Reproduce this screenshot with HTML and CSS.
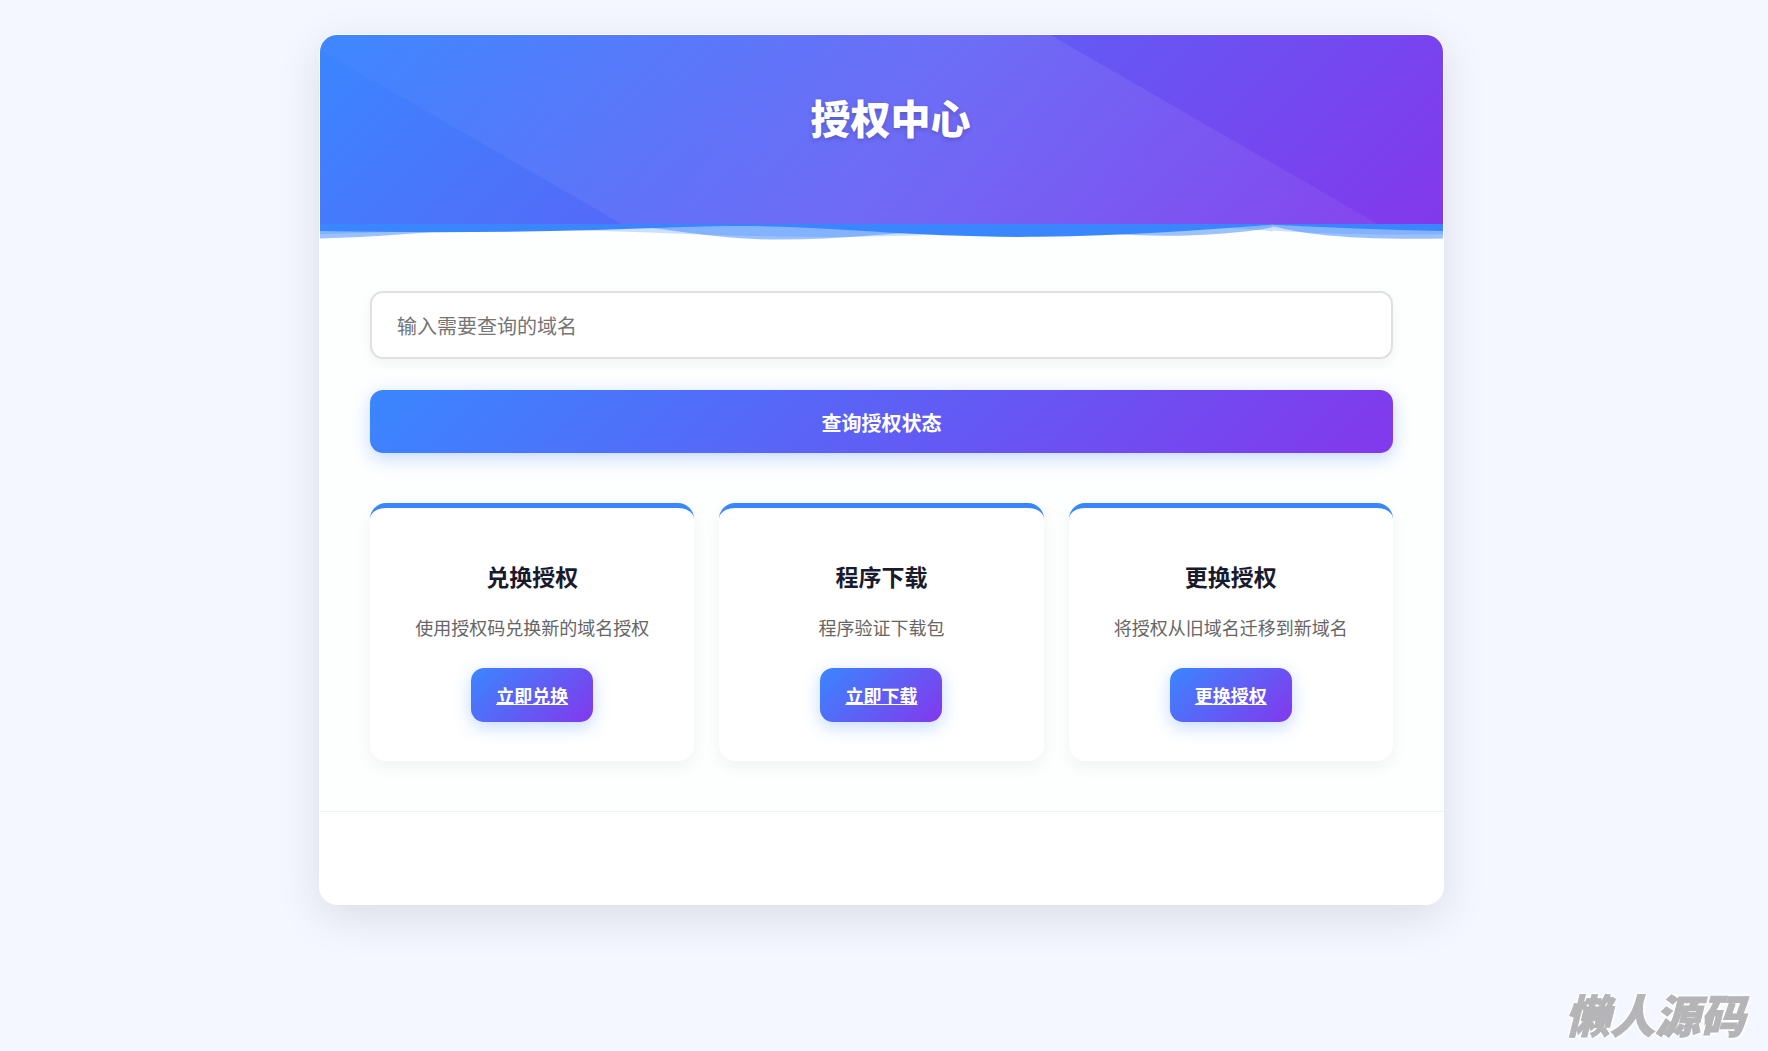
FILE: index.html
```html
<!DOCTYPE html>
<html lang="zh-CN">
<head>
<meta charset="utf-8">
<meta name="viewport" content="width=device-width, initial-scale=1">
<title>授权中心</title>
<link rel="stylesheet" href="styles.css">
</head>
<body>
<main class="panel">
  <header class="hero">
    <h1 class="hero-title">授权中心</h1>
  </header>
  <svg class="wave" viewBox="0 0 1200 120" preserveAspectRatio="none" aria-hidden="true">
    <defs>
      <g id="wave-tile" fill="#3a86ff">
        <path opacity=".25" d="M0,0V46.29c47.79,22.2,103.59,32.17,158,28,70.36-5.37,136.33-33.31,206.8-37.5C438.64,32.43,512.34,53.67,583,72.05c69.27,18,138.3,24.88,209.4,13.08,36.15-6,69.85-17.84,104.45-29.34C989.49,25,1113-14.29,1200,52.47V0Z"/>
        <path opacity=".5" d="M0,0V15.81C13,36.92,27.64,56.86,47.69,72.05,99.41,111.27,165,111,224.58,91.58c31.15-10.15,60.09-26.07,89.67-39.8,40.92-19,84.73-46,130.83-49.67,36.26-2.85,70.9,9.42,98.6,31.56,31.77,25.39,62.32,62,103.63,73,40.44,10.79,81.35-6.69,119.13-24.28s75.16-39,116.92-43.05c59.73-5.85,113.28,22.88,168.9,38.84,30.2,8.66,59,6.17,87.09-7.5,22.43-10.89,48-26.93,60.65-49.24V0Z"/>
        <path d="M0,0V5.63C149.93,59,314.09,71.32,475.83,42.57c43-7.64,84.23-20.12,127.61-26.46,59-8.63,112.48,12.24,165.56,35.9C827.93,77.22,886,95.24,951.2,90c86.53-7,172.46-45.71,248.8-84.81V0Z"/>
      </g>
    </defs>
    <use href="#wave-tile" x="-182"/>
    <use href="#wave-tile" x="1018"/>
  </svg>
  <section class="content">
    <form class="search">
      <input class="search-input" type="text" aria-label="域名" placeholder="输入需要查询的域名">
      <button class="btn search-btn" type="button">查询授权状态</button>
    </form>
    <div class="cards">
      <article class="card">
        <h2 class="card-title">兑换授权</h2>
        <p class="card-text">使用授权码兑换新的域名授权</p>
        <a class="btn card-btn" href="#">立即兑换</a>
      </article>
      <article class="card">
        <h2 class="card-title">程序下载</h2>
        <p class="card-text">程序验证下载包</p>
        <a class="btn card-btn" href="#">立即下载</a>
      </article>
      <article class="card">
        <h2 class="card-title">更换授权</h2>
        <p class="card-text">将授权从旧域名迁移到新域名</p>
        <a class="btn card-btn" href="#">更换授权</a>
      </article>
    </div>
  </section>
  <footer class="footer"></footer>
</main>
<div class="watermark">懒人源码</div>
</body>
</html>
```
FILE: styles.css
```css
:root {
  --primary: #3a86ff;
  --secondary: #8338ec;
  --gradient: linear-gradient(135deg, var(--primary), var(--secondary));
}

* {
  box-sizing: border-box;
}

body {
  margin: 0;
  padding: 34px 5px 34px 0;
  min-height: 100vh;
  background: #f4f7ff;
  color: #1a1a2e;
  font-family: "Noto Sans CJK SC", sans-serif;
  font-size: 18px;
}

.panel {
  max-width: 1125px;
  margin: 0 auto;
  background: #fff;
  border: 1px solid #fff;
  border-radius: 18px;
  box-shadow: 0 12px 45px rgba(0, 0, 0, .11);
  overflow: hidden;
}

.hero {
  position: relative;
  overflow: hidden;
  padding: 54px 0 79px 18px;
  background: var(--gradient);
  text-align: center;
}

.hero::before {
  content: "";
  position: absolute;
  top: -36%;
  left: -50%;
  width: 200%;
  height: 200%;
  background: linear-gradient(to right, rgba(255, 255, 255, 0) 20%, rgba(255, 255, 255, .09) 50%, rgba(255, 255, 255, .05) 70%);
  transform: rotate(30deg);
}

.hero-title {
  position: relative;
  margin: 0;
  color: #fff;
  font-size: 40px;
  line-height: 56px;
  font-weight: 900;
  text-shadow: 0 2px 5px rgba(0, 0, 0, .2);
}

.wave {
  display: block;
  width: 100%;
  height: 17px;
  background: #fdfefe;
}

.content {
  padding: 50px;
  background: #fdfefe;
}

.search {
  display: grid;
  gap: 31px;
}

.search-input {
  width: 100%;
  height: 68px;
  padding: 0 25px;
  border: 2px solid #e0e0e0;
  border-radius: 13px;
  background: #fff;
  color: #1a1a2e;
  font: inherit;
  font-size: 20px;
  box-shadow: 0 4px 12px rgba(0, 0, 0, .05);
}

.search-input::placeholder {
  color: #757575;
}

.btn {
  border: 0;
  border-radius: 13px;
  background: var(--gradient);
  color: #fff;
  font: inherit;
  font-weight: 700;
  box-shadow: 0 5px 17px rgba(58, 134, 255, .3);
  cursor: pointer;
}

.search-btn {
  height: 63px;
  padding: 2px 0 0;
  font-size: 20px;
}

.cards {
  display: grid;
  grid-template-columns: repeat(3, 1fr);
  gap: 25px;
  margin-top: 50px;
}

.card {
  display: flex;
  flex-direction: column;
  align-items: center;
  padding: 51px 34px 39px;
  border-top: 5px solid var(--primary);
  border-radius: 16px;
  background: #fff;
  box-shadow: 0 6px 17px rgba(0, 0, 0, .05);
  text-align: center;
}

.card-title {
  margin: 0 0 19px;
  font-size: 23px;
  line-height: 34px;
}

.card-text {
  margin: 0 0 25px;
  color: #666;
  line-height: 31px;
}

.card-btn {
  padding: 12px 25px;
  line-height: 30px;
  text-decoration: underline;
}

.footer {
  height: 93px;
  border-top: 1px solid #eff2f2;
}

.watermark {
  position: fixed;
  right: 23px;
  bottom: 7px;
  color: #b5b5b7;
  font-size: 45px;
  line-height: 60px;
  font-weight: 900;
  font-style: italic;
  -webkit-text-stroke: 1px #b5b5b7;
  text-shadow: 2px 0 2px #fff, -2px 0 2px #fff, 0 2px 2px #fff, 0 -2px 2px #fff;
}
```
